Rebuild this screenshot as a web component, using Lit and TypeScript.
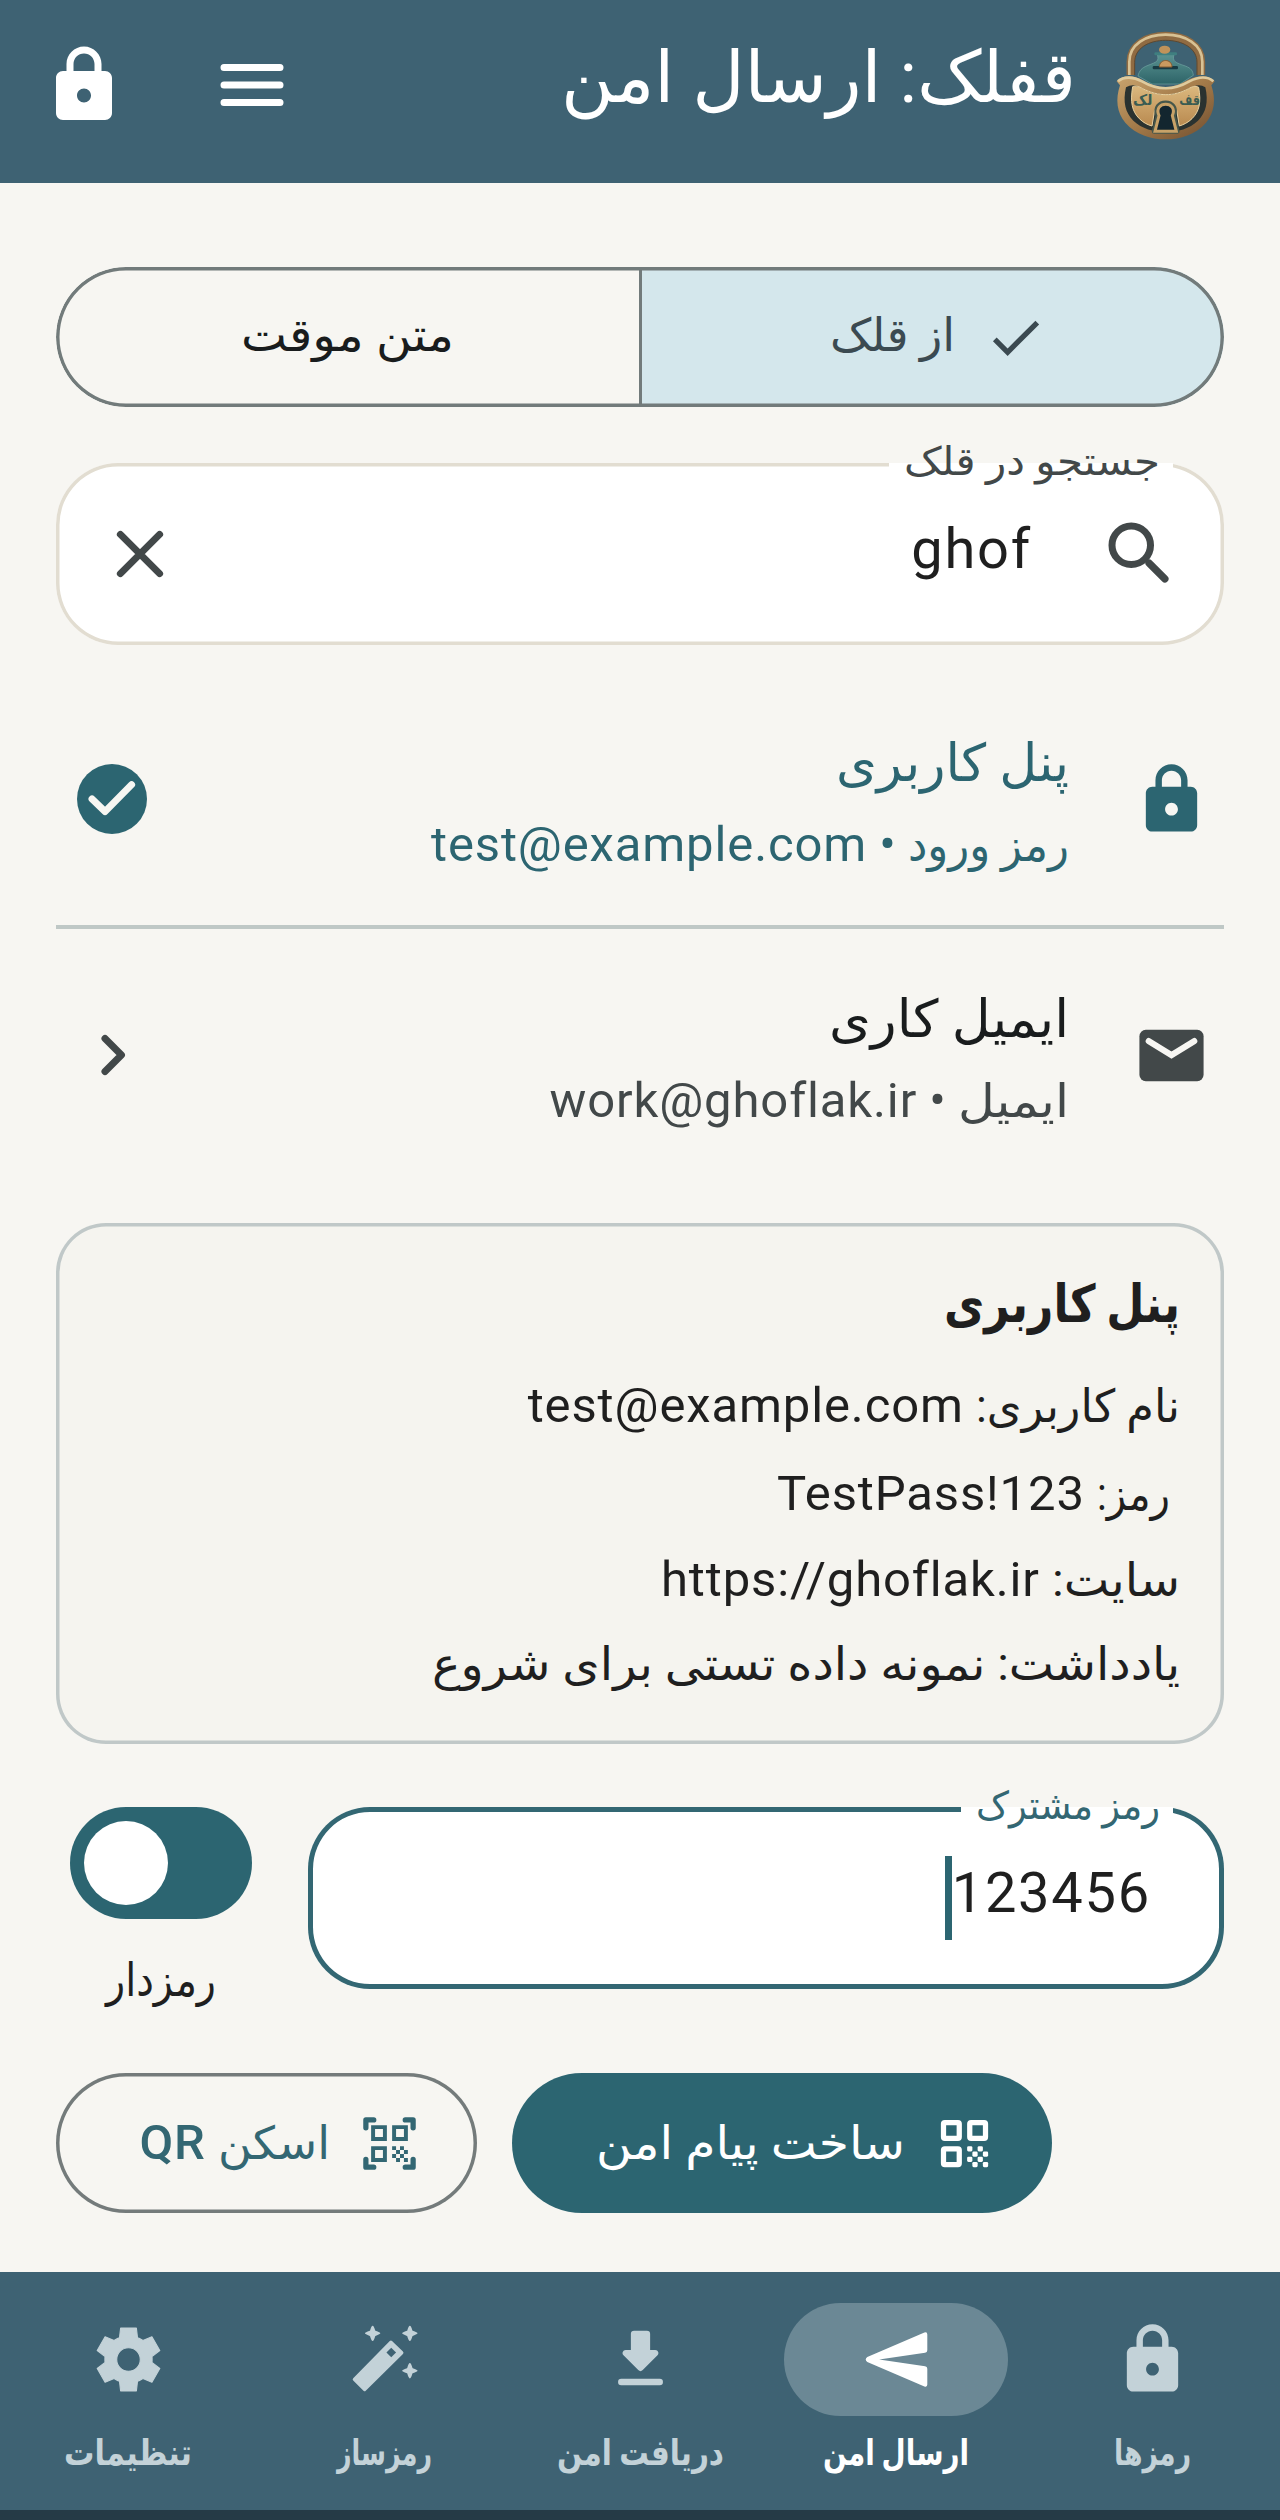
import { LitElement, html, css, svg, SVGTemplateResult } from 'lit';
import { customElement, property, state } from 'lit/decorators.js';
import { classMap } from 'lit/directives/class-map.js';

const LOCK = 'M18 8h-1V6c0-2.76-2.24-5-5-5S7 3.24 7 6v2H6c-1.1 0-2 .9-2 2v10c0 1.1.9 2 2 2h12c1.1 0 2-.9 2-2V10c0-1.1-.9-2-2-2zm-6 9c-1.1 0-2-.9-2-2s.9-2 2-2 2 .9 2 2-.9 2-2 2zM9 8V6c0-1.66 1.34-3 3-3s3 1.34 3 3v2H9z';
const QR_EYE = 'M4.5 3h5A1.5 1.5 0 0 1 11 4.5v5A1.5 1.5 0 0 1 9.5 11h-5A1.5 1.5 0 0 1 3 9.5v-5A1.5 1.5 0 0 1 4.5 3zM5 5v4h4V5z';

const ICONS: Record<string, SVGTemplateResult> = {
  lock: svg`<path d=${LOCK} />`,
  menu: svg`<path d="M4 7h16M4 12h16M4 17h16" fill="none" stroke="currentColor" stroke-width="2" stroke-linecap="round" />`,
  check: svg`<path d="M9 16.17 4.83 12l-1.42 1.41L9 19 21 7l-1.41-1.41z" />`,
  close: svg`<path d="M6.4 6.4l11.2 11.2M17.6 6.4 6.4 17.6" fill="none" stroke="currentColor" stroke-width="2" stroke-linecap="round" />`,
  search: svg`
    <g fill="none" stroke="currentColor">
      <circle cx="9.5" cy="9.5" r="5.5" stroke-width="2" />
      <path d="M14.6 14.6l4.5 4.5" stroke-width="2.1" stroke-linecap="round" />
    </g>`,
  checkCircle: svg`
    <circle cx="12" cy="12" r="10" />
    <path d="M6.3 12l3.7 3.6 7.6-7.7" fill="none" stroke="#f7f6f2" stroke-width="2" stroke-linecap="round" stroke-linejoin="round" />`,
  chevron: svg`<path d="M10 7.3l4.7 4.7-4.7 4.7" fill="none" stroke="currentColor" stroke-width="2" stroke-linecap="round" stroke-linejoin="round" />`,
  mail: svg`
    <rect x="2" y="4" width="20" height="16" rx="2" />
    <path d="M4.9 7.5l7.1 4.4 7.1-4.4" fill="none" stroke="#f7f6f2" stroke-width="1.9" stroke-linecap="round" />`,
  qr: svg`
    <path fill-rule="evenodd" d=${QR_EYE} />
    <path fill-rule="evenodd" transform="translate(10 0)" d=${QR_EYE} />
    <path fill-rule="evenodd" transform="translate(0 10)" d=${QR_EYE} />
    ${[[13, 13], [17, 13], [15, 15], [19, 15], [13, 17], [17, 17], [15, 19], [19, 19]].map(
      ([x, y]) => svg`<rect x=${x} y=${y} width="2" height="2" rx=".5" />`
    )}`,
  qrScan: svg`
    <path d="M9.5 6.5v3h-3v-3h3M11 5H5v6h6V5zm-1.5 9.5v3h-3v-3h3M11 13H5v6h6v-6zm6.5-6.5v3h-3v-3h3M19 5h-6v6h6V5zm-6 8h1.5v1.5H13V13zm1.5 1.5H16V16h-1.5v-1.5zM16 13h1.5v1.5H16V13zm-3 3h1.5v1.5H13V16zm1.5 1.5H16V19h-1.5v-1.5zM16 16h1.5v1.5H16V16zm1.5-1.5H19V16h-1.5v-1.5zm0 3H19V19h-1.5v-1.5z" />
    <path d="M3 6V3h3M18 3h3v3M3 18v3h3M18 21h3v-3" fill="none" stroke="currentColor" stroke-width="2" stroke-linecap="round" stroke-linejoin="round" />`,
  send: svg`<path d="M21.6 4.2q0-.9-.9-.6L2.9 11.2q-1 .8 0 1.6l17.8 7.6q.9.3.9-.6v-4.9q0-.7-.7-.8L6.6 12l14.3-2.1q.7-.1.7-.8z" />`,
  download: svg`
    <path d="M10 3h4a1 1 0 0 1 1 1v5h1.6c.9 0 1.3 1 .7 1.7l-4.6 4.6a1 1 0 0 1-1.4 0l-4.6-4.6C6.1 10 6.5 9 7.4 9H9V4a1 1 0 0 1 1-1z" />
    <rect x="5" y="18" width="14" height="2" rx="1" />`,
  wand: svg`
    <path stroke="currentColor" stroke-linejoin="round" d="M2.6 18.2 14 6.6l3.4 3.3L5.8 21.4z" />
    <path d="M14.1 8.3l1.5 1.5-1.5 1.5-1.5-1.5z" fill="#3e6273" />
    ${[[8.3, 3.85], [19.9, 3.85], [19.9, 15.5]].map(
      ([x, y]) => svg`<path transform="translate(${x} ${y})" d="M0-2.4q.4 0 .8 1.5.1.1.1.1 1.5.5 1.5.8t-1.5.8q-.1 0-.1.1-.4 1.5-.8 1.5t-.8-1.5q0-.1-.1-.1Q-2.4.3-2.4 0t1.500-.8q.1 0 .1-.1.4-1.500.8-1.500z" />`
    )}`,
  settings: svg`<path transform="scale(.025) translate(0 960)" fill-rule="evenodd" stroke="currentColor" stroke-width="14" stroke-linejoin="round" d="m382-87-14-121q-20-7-36-16t-32-20l-112 48-98-172 98-76q-2-9-2-18v-36q0-9 2-18l-98-76 98-172 112 48q16-11 32-20t36-16l14-121h196l14 121q20 7 36 16t32 20l112-48 98 172-98 76q2 9 2 18v36q0 9-2 18l98 76-98 172-112-48q-16 11-32 20t-36 16l-14 121zM480-333q61 0 104-43t43-104-43-104-104-43-104 43-43 104 43 104 104 43z" />`,
};

// Persian run set to a fixed advance, its baseline on the surrounding line
const fa = (text: string, width: number) => html`<svg class="fa" width=${width} height="1"><text
  x=${width} y="1" direction="rtl" textLength=${width} lengthAdjust="spacingAndGlyphs">${text}</text></svg>`;

@customElement('app-icon')
export class AppIcon extends LitElement {
  @property() name = 'lock';
  @property({ type: Number }) size = 77;

  static styles = css`
    :host {
      display: block;
      flex: none;
    }
    svg {
      display: block;
      fill: currentColor;
    }
  `;

  render() {
    return html`<svg viewBox="0 0 24 24" width=${this.size} height=${this.size}>${ICONS[this.name]}</svg>`;
  }
}

@customElement('app-logo')
export class AppLogo extends LitElement {
  static styles = css`
    :host {
      display: block;
      flex: none;
      direction: ltr;
    }
    svg {
      display: block;
      width: 130px;
      height: 130px;
    }
    .word {
      font: 700 44px 'DejaVu Sans', sans-serif;
      fill: #3a5c52;
    }
  `;

  render() {
    return html`
      <svg viewBox="0 0 390 390">
        <defs>
          <linearGradient id="gold" x1="0" y1="0" x2="1" y2="1">
            <stop offset="0" stop-color="#c9a46e" />
            <stop offset=".5" stop-color="#a37a49" />
            <stop offset="1" stop-color="#6f4d2f" />
          </linearGradient>
          <linearGradient id="plate" x1="0" y1="0" x2="0" y2="1">
            <stop offset="0" stop-color="#dbb87e" />
            <stop offset="1" stop-color="#b98a50" />
          </linearGradient>
          <linearGradient id="jar" x1="0" y1="0" x2="0" y2="1">
            <stop offset="0" stop-color="#5a9291" />
            <stop offset="1" stop-color="#2d6468" />
          </linearGradient>
        </defs>
        <path d="M92 165v-40c0-48 46-77 105-77s106 29 106 77v40" fill="none" stroke="#8f6b42" stroke-width="25" />
        <path d="M88 165v-40c0-52 50-81 109-81s110 29 110 81v40" fill="none" stroke="#d8c294" stroke-width="8" />
        <path d="M104 165v-38c0-42 42-66 93-66s94 24 94 66v38" fill="none" stroke="#5e482f" stroke-width="3" />
        <path d="M172 104h50c-6 20 4 24 34 34 18 7 22 14 24 28l-40 26h-84l-42-24c4-16 10-24 30-32 26-10 34-12 28-32z" fill="url(#jar)" stroke="#6fa5a2" stroke-width="2" />
        <rect x="163" y="97" width="68" height="9" rx="4" fill="#3f7f80" />
        <ellipse cx="194" cy="89" rx="17" ry="12" fill="#c0935a" />
        <rect x="158" y="138" width="76" height="10" rx="4" fill="#183b44" />
        <path d="M178 141c0-26 38-26 38 0z" fill="#c99a60" stroke="#865c31" stroke-width="3" />
        <path d="M50 184c18-20 48-20 78-3 46 28 88 28 134 0 32-17 64-17 82 3l-10 12c14 42 10 82-16 112-32 36-76 50-121 50s-89-14-121-50c-26-30-30-70-16-112z" fill="url(#gold)" />
        <path d="M54 184c18-16 46-14 72 0 48 28 94 28 142 0 28-14 54-16 72 0" fill="none" stroke="#dfcb9e" stroke-width="8" />
        <path d="M78 202c16-10 30-8 46 2 48 26 98 26 146 0 18-10 32-12 46-2 10 44 2 76-22 100-26 24-60 34-97 34s-71-10-97-34c-24-24-32-56-22-100z" fill="#2a3230" />
        <path d="M98 200c10-4 20 0 30 6 48 24 92 24 138 0 10-6 20-10 30-4 8 46 2 72-20 94-12 12-26 18-38 22l-8-48h-66l-8 48c-14-4-26-10-38-22-22-22-28-50-20-96z" fill="url(#plate)" stroke="#ead2a0" stroke-width="3" />
        <text class="word" x="99" y="254" textLength="58" lengthAdjust="spacingAndGlyphs">لک</text>
        <text class="word" x="238" y="254" textLength="62" lengthAdjust="spacingAndGlyphs">قف</text>
        <path d="M163 334l11-46c-22-52 68-52 46 0l11 46z" fill="#13262f" stroke="#46574b" stroke-width="15" stroke-linejoin="round" />
        <path d="M165 334l12-47c-20-46 60-46 40 0l12 47z" fill="#13262f" stroke="#c8a268" stroke-width="9" />
      </svg>
    `;
  }
}

@customElement('app-root')
export class AppRoot extends LitElement {
  @state() private tab = 'send';

  private nav = [
    { id: 'vault', icon: 'lock', label: 'رمزها', width: 77 },
    { id: 'send', icon: 'send', label: 'ارسال امن', width: 146 },
    { id: 'receive', icon: 'download', label: 'دریافت امن', width: 167 },
    { id: 'generator', icon: 'wand', label: 'رمزساز', width: 95 },
    { id: 'settings', icon: 'settings', label: 'تنظیمات', width: 128 },
  ];

  private items = [
    { icon: 'lock', title: fa('پنل کاربری', 233), kind: fa('رمز ورود', 161), value: 'test@example.com', selected: true },
    { icon: 'mail', title: fa('ایمیل کاری', 240), kind: fa('ایمیل', 111), value: 'work@ghoflak.ir', selected: false },
  ];

  static styles = css`
    :host {
      display: flex;
      flex-direction: column;
      width: 1280px;
      height: 2520px;
      overflow: hidden;
      direction: rtl;
      background: #f7f6f2;
      color: #1f1f1f;
      font-family: Roboto, 'DejaVu Sans', sans-serif;
      font-size: 49px;
      line-height: 81px;
      white-space: nowrap;
    }
    * {
      box-sizing: border-box;
    }
    .fa {
      overflow: visible;
      fill: currentColor;
      font-size: 0.93em;
    }
    .la {
      direction: ltr;
      unicode-bidi: isolate;
      letter-spacing: 0.875px;
      line-height: 0;
    }

    .header {
      display: flex;
      align-items: flex-start;
      height: 183px;
      padding: 20px 50px 0 42px;
      background: #3e6273;
      color: #fff;
    }
    .title {
      flex: 1;
      margin-right: 24px;
      padding-top: 6px;
      font-size: 77px;
      line-height: 100px;
    }
    .actions {
      display: flex;
      gap: 84px;
      padding-top: 23px;
    }

    .main {
      flex: 1;
      padding: 84px 56px 0;
    }
    .segments {
      position: relative;
      display: flex;
      height: 140px;
      border-radius: 70px;
      overflow: hidden;
    }
    .segments::after {
      content: '';
      position: absolute;
      inset: 0;
      border-radius: 70px;
      box-shadow: inset 0 0 0 3.5px #727b7b;
    }
    .segment {
      display: flex;
      flex: none;
      align-items: center;
      justify-content: center;
      gap: 29px;
      width: 583px;
      color: #191c1d;
    }
    .segment.on {
      justify-content: flex-start;
      width: 585px;
      padding-right: 177px;
      border-left: 3px solid #727b7b;
      background: #d4e7ec;
      color: #3b4a51;
    }
    .segment-text {
      padding-bottom: 6px;
    }

    .field {
      position: relative;
      display: flex;
      align-items: center;
      height: 182px;
      border-radius: 62px;
      background: #fff;
      box-shadow: inset 0 0 0 3.5px #e2ddd1;
      font-size: 56px;
    }
    .field .la {
      letter-spacing: 1.75px;
    }
    .legend {
      position: absolute;
      top: 0;
      right: 51px;
      height: 6px;
      padding: 0 13px 0 15px;
      background: #fff;
      color: #424849;
      font-size: 42px;
      line-height: 0;
    }
    .legend .fa {
      position: relative;
      top: -2px;
    }
    .value {
      padding-bottom: 10px;
    }
    .search {
      margin: 56px 0 28px;
      padding: 0 42px;
      color: #424849;
    }
    .search .value {
      flex: 1;
      margin-right: 66px;
      color: #1f1f1f;
    }

    .item {
      display: flex;
      align-items: center;
      height: 252px;
      padding: 0 14px;
      color: #424849;
    }
    .item + .item {
      height: 256px;
      border-top: 4px solid #bfc8c6;
    }
    .item.on,
    .item.on .item-title {
      color: #2c6571;
    }
    .item-text {
      flex: 1;
      margin-right: 64px;
      padding-top: 6px;
    }
    .item-title {
      color: #191c1d;
      font-size: 56px;
      line-height: 84px;
    }

    .card {
      height: 521px;
      margin: 42px 0 63px;
      padding: 38px 44px 0;
      border-radius: 50px;
      background: #f5f4ef;
      box-shadow: inset 0 0 0 3.5px #c0c8c8;
      line-height: 86px;
    }
    .card-title {
      margin-bottom: 18px;
      font-size: 56px;
      font-weight: 700;
      line-height: 84px;
    }
    .card-password {
      margin-top: 2px;
      padding-right: 10px;
    }
    .card-note {
      margin-top: -2px;
    }

    .secret {
      display: flex;
      align-items: flex-start;
      gap: 42px;
      height: 266px;
    }
    .password {
      flex: 1;
      padding-right: 73px;
      box-shadow: inset 0 0 0 5px #336773;
    }
    .password .legend {
      color: #336773;
    }
    .caret {
      width: 7px;
      height: 84px;
      background: #2c6571;
    }
    .toggle {
      display: flex;
      flex-direction: column;
      align-items: center;
      gap: 20px;
      width: 210px;
    }
    .track {
      display: flex;
      justify-content: flex-end;
      width: 182px;
      height: 112px;
      padding: 14px;
      border-radius: 56px;
      background: #2c6571;
    }
    .thumb {
      width: 84px;
      height: 84px;
      border-radius: 50%;
      background: #fff;
    }

    .buttons {
      display: flex;
      justify-content: flex-end;
      gap: 35px;
    }
    .button {
      display: flex;
      align-items: center;
      gap: 28px;
      height: 140px;
      padding: 0 56px;
      border-radius: 70px;
    }
    .button.filled {
      width: 540px;
      background: #2c6571;
      color: #fff;
    }
    .button.outlined {
      width: 421px;
      box-shadow: inset 0 0 0 3.5px #747b7b;
      color: #336773;
    }
    .button .la {
      font-weight: 500;
    }
    .button-text {
      padding-bottom: 2px;
    }

    .nav {
      display: flex;
      height: 248px;
      padding-top: 31px;
      border-bottom: 10px solid #253a46;
      background: #3e6273;
      color: #c3d2d8;
    }
    .nav-item {
      display: flex;
      flex: 1;
      flex-direction: column;
      align-items: center;
      gap: 11px;
      font-size: 38.5px;
      font-weight: 700;
      line-height: 50px;
    }
    .nav-item.on {
      color: #fff;
    }
    .pill {
      display: grid;
      place-items: center;
      width: 224px;
      height: 113px;
      border-radius: 57px;
    }
    .on .pill {
      background: #6b8895;
    }
  `;

  renderItem(item: any) {
    return html`
      <div class=${classMap({ item: true, on: item.selected })}>
        <app-icon name=${item.icon} size="77"></app-icon>
        <div class="item-text">
          <div class="item-title">${item.title}</div>
          <div>${item.kind} • <span class="la">${item.value}</span></div>
        </div>
        <app-icon name=${item.selected ? 'checkCircle' : 'chevron'} size="84"></app-icon>
      </div>
    `;
  }

  render() {
    return html`
      <div class="header">
        <app-logo></app-logo>
        <div class="title">${fa('قفلک: ارسال امن', 515)}</div>
        <div class="actions">
          <app-icon name="menu" size="84"></app-icon>
          <app-icon name="lock" size="84"></app-icon>
        </div>
      </div>

      <div class="main">
        <div class="segments">
          <div class="segment on">
            <app-icon name="check" size="63"></app-icon>
            <div class="segment-text">${fa('از قلک', 125)}</div>
          </div>
          <div class="segment">
            <div class="segment-text">${fa('متن موقت', 213)}</div>
          </div>
        </div>

        <div class="field search">
          <div class="legend">${fa('جستجو در قلک', 256)}</div>
          <app-icon name="search" size="84"></app-icon>
          <div class="value"><span class="la">ghof</span></div>
          <app-icon name="close" size="84"></app-icon>
        </div>

        ${this.items.map((item) => this.renderItem(item))}

        <div class="card">
          <div class="card-title">${fa('پنل کاربری', 236)}</div>
          <div>${fa('نام کاربری:', 204)} <span class="la">test@example.com</span></div>
          <div class="card-password">${fa('رمز:', 73)} <span class="la">TestPass!123</span></div>
          <div>${fa('سایت:', 128)} <span class="la">https://ghoflak.ir</span></div>
          <div class="card-note">${fa('یادداشت: نمونه داده تستی برای شروع', 748)}</div>
        </div>

        <div class="secret">
          <div class="field password">
            <div class="legend">${fa('رمز مشترک', 184)}</div>
            <div class="value"><span class="la">123456</span></div>
            <div class="caret"></div>
          </div>
          <div class="toggle">
            <div class="track"><div class="thumb"></div></div>
            <div>${fa('رمزدار', 110)}</div>
          </div>
        </div>

        <div class="buttons">
          <div class="button filled">
            <app-icon name="qr" size="63"></app-icon>
            <div class="button-text">${fa('ساخت پیام امن', 309)}</div>
          </div>
          <div class="button outlined">
            <app-icon name="qrScan" size="63"></app-icon>
            <div class="button-text">${fa('اسکن', 112)} <span class="la">QR</span></div>
          </div>
        </div>
      </div>

      <div class="nav">
        ${this.nav.map(
          (n) => html`
            <div class=${classMap({ 'nav-item': true, on: n.id === this.tab })} @click=${() => (this.tab = n.id)}>
              <div class="pill"><app-icon name=${n.icon} size="77"></app-icon></div>
              <div>${fa(n.label, n.width)}</div>
            </div>
          `
        )}
      </div>
    `;
  }
}
